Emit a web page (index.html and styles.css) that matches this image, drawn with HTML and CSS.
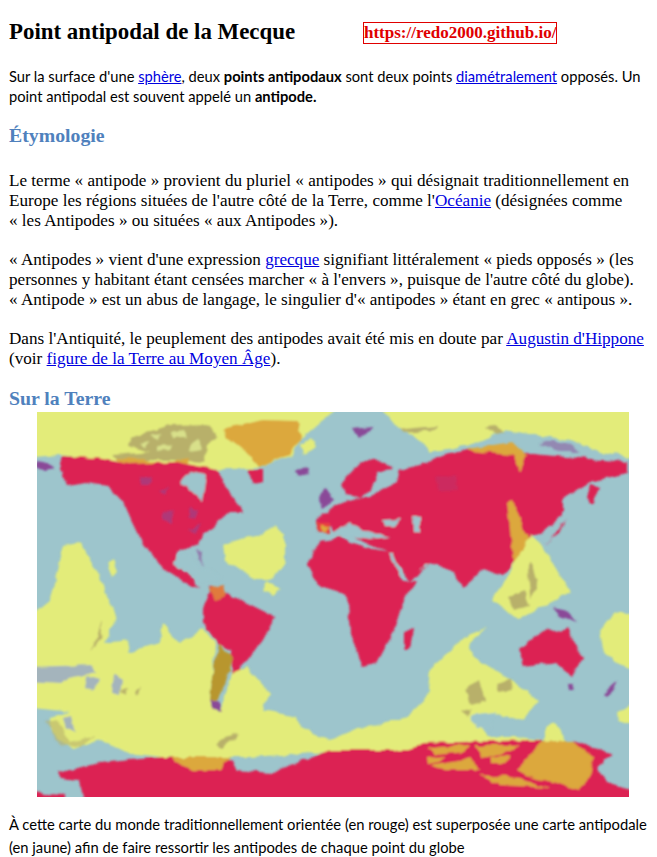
FILE: index.html
```html
<!DOCTYPE html>
<html lang="fr">
<head>
<meta charset="utf-8">
<title>Point antipodal de la Mecque</title>
<link rel="stylesheet" href="styles.css">
</head>
<body>
<header class="top">
  <h1 class="title">Point antipodal de la Mecque</h1>
  <a class="site" href="#">https://redo2000.github.io/</a>
</header>
<p class="sans intro">Sur la surface d'une <a href="#">sphère</a>, deux <b>points antipodaux</b> sont deux points <a href="#">diamétralement</a> opposés. Un<br>point antipodal est souvent appelé un <b>antipode.</b></p>
<h2 class="section first">Étymologie</h2>
<p class="serif">Le terme « antipode » provient du pluriel « antipodes » qui désignait traditionnellement en<br>Europe les régions situées de l'autre côté de la Terre, comme l'<a href="#">Océanie</a> (désignées comme<br>« les Antipodes » ou situées « aux Antipodes »).</p>
<p class="serif">« Antipodes » vient d'une expression <a href="#">grecque</a> signifiant littéralement « pieds opposés » (les<br>personnes y habitant étant censées marcher « à l'envers », puisque de l'autre côté du globe).<br>« Antipode » est un abus de langage, le singulier d'« antipodes » étant en grec « antipous ».</p>
<p class="serif">Dans l'Antiquité, le peuplement des antipodes avait été mis en doute par <a href="#">Augustin d'Hippone</a><br>(voir <a href="#">figure de la Terre au Moyen Âge</a>).</p>
<h2 class="section second">Sur la Terre</h2>
<svg class="map" viewBox="37 412 592 385" role="img" aria-label="Carte du monde et sa carte antipodale">
  <defs>
    <filter id="soft" x="-3%" y="-3%" width="106%" height="106%">
      <feTurbulence type="fractalNoise" baseFrequency="0.09" numOctaves="2" seed="4" result="n"/>
      <feDisplacementMap in="SourceGraphic" in2="n" scale="6" xChannelSelector="R" yChannelSelector="G"/>
      <feGaussianBlur stdDeviation="0.9"/>
    </filter>
    <clipPath id="frame"><rect x="37" y="412" width="592" height="385"/></clipPath>
  </defs>
  <rect x="37" y="412" width="592" height="385" fill="#9dc5cc"/>
  <g clip-path="url(#frame)">
  <g filter="url(#soft)">
    <!-- arctic yellow -->
    <path class="y" d="M20 400H348L318 424 300 440 292 456 258 468 205 470 120 462 60 455 20 458Z"/>
    <path class="y" d="M375 400H645V459L600 452 570 440 535 435 505 430 470 445 430 452 420 440 395 425Z"/>
    <path class="y" d="M300 444 312 438 316 448 302 456Z"/>
    <path class="p" d="M352 428 362 427 374 426 366 434 358 438Z"/>
    <path class="o2" d="M402 430 412 428 438 426 436 430 405 433ZM485 428 495 426 505 432 496 434Z"/>
    <path class="p" d="M540 444 552 440 570 444 580 452 560 452Z" opacity=".5"/>
    <!-- canadian islands, Greenland -->
    <path class="o2" d="M130 438 170 425 207 424 222 440 206 450 205 462 170 460 120 460 112 455 150 452 128 446Z"/>
    <path class="yt" d="M150 436 160 434 158 440 ZM172 432 182 430 186 438 174 438ZM190 444 200 440 200 450 190 452ZM160 446 172 444 170 450 158 452ZM140 444 148 442 146 448Z"/>
    <path class="y" d="M207 444 225 432 240 448 250 462 222 466 206 458Z"/>
    <path class="o" d="M222 430 262 420 298 421 301 438 290 455 258 468 245 452 230 440Z"/>
    <path class="o" d="M115 458 145 459 160 465 125 468Z"/>
    <path class="o" d="M176 460 190 458 188 468 175 468Z"/>
    <!-- North America -->
    <path class="r" d="M63 456 97 458 130 464 177 462 217 470 230 492 243 512 230 512 207 532 197 545 177 552 172 565 187 572 200 588 190 585 163 568 143 545 130 518 123 502 107 485 87 482 67 485 60 468Z"/>
    <path class="s" d="M180 482 190 472 207 475 203 502 193 492Z"/>
    <path class="p" d="M37 461 48 463 54 470 44 472 37 468Z"/>
    <path class="r" d="M247 470 262 470 262 482 254 484Z"/>
    <path class="p" d="M295 470 310 468 309 474 298 476Z"/>
    <path class="p" d="M318 497 326 488 334 500 322 508Z"/>
    <path class="p" d="M188 530 205 520 200 523 195 533ZM163 512 175 510 172 522 163 520ZM190 508 198 510 196 518 188 516ZM140 478 152 476 150 484 142 484ZM160 490 168 488 166 494Z" opacity=".55"/>
    <path class="p" d="M196 550 203 552 202 560 204 568Z" opacity=".6"/>
    <path class="s" d="M172 565 178 555 190 555 198 568 212 570 222 578 200 582 188 570Z"/>
    <!-- Africa -->
    <path class="r" d="M307 565 320 542 340 537 350 542 370 548 390 552 403 582 417 582 403 602 393 633 377 663 363 667 350 633 348 600 340 592 317 585Z"/>
    <path class="r" d="M403 633 413 628 410 650 403 650Z"/>
    <!-- Eurasia -->
    <path class="r" d="M397 482 400 470 420 465 445 455 467 450 517 452 543 455 627 462 627 473 590 482 563 498 563 515 543 532 530 535 510 568 503 575 493 572 483 568 463 588 453 572 430 562 420 575 410 582 390 552 370 545 350 535 335 535 330 525 318 530 316 522 330 508 345 502 370 496Z"/>
    <path class="r" d="M345 496 342 482 363 460 385 462 392 470 378 472 372 488 360 498Z"/>
    <path class="r" d="M590 485 600 488 593 505 587 498Z"/>
    <path class="r" d="M560 532 566 520 550 540 543 545Z"/>
    <path class="s" d="M332 535 350 522 365 530 390 538 370 540 345 536Z"/>
    <path class="s" d="M382 520 400 519 395 526 384 526Z"/>
    <path class="s" d="M412 516 420 517 420 533 413 531Z"/>
    <path class="s" d="M389 552 393 552 402 576 399 576Z"/>
    <path class="s" d="M425 563 429 563 420 572Z"/>
    <path class="p" d="M434 478 456 474 458 490 438 492Z" opacity=".2"/>
    <path class="f" d="M316 523 329 523 328 532 319 532Z"/>
    <path class="o" d="M321 526 327 526 325 531 321 531Z"/>
    <!-- East Asia orange + yellow -->
    <path class="o" d="M467 449 513 442 527 455 520 472 512 455 470 451Z"/>
    <path class="o" d="M507 502 513 500 530 545 513 565 512 548Z"/>
    <path class="y" d="M530 535 540 542 570 592 548 604 517 620 493 600 500 588 507 578 513 565Z"/>
    <path class="o2" d="M528 570 532 562 538 590 530 598ZM508 596 524 590 530 606 514 610Z"/>
    <path class="p" d="M553 608 565 610 577 622 560 616Z"/>
    <!-- Atlantic yellow -->
    <path class="y" d="M223 545 260 535 275 525 285 535 285 565 270 580 255 580 225 560Z"/>
    <path class="y" d="M267 582 280 588 272 595 262 590Z"/>
    <path class="y" d="M107 562 113 558 118 572 112 578Z"/>
    <!-- southern big yellow -->
    <path class="y" d="M25 620 50 600 63 545 80 542 100 578 108 600 117 620 103 643 130 640 127 653 160 643 163 623 180 643 203 628 215 643 210 700 220 712 233 670 247 667 270 693 263 710 297 717 300 727 330 740 360 727 373 725 407 717 427 697 430 670 463 637 487 628 470 643 473 657 500 673 537 700 523 720 497 713 477 723 487 737 517 737 543 740 553 727 570 745 420 752 330 752 250 757 163 757 127 753 100 740 73 750 50 730 50 717 70 712 25 707Z"/>
    <path class="g" d="M25 667 60 666 92 665 95 672 70 678 60 684 25 682Z"/>
    <path class="g" d="M86 676 100 680 96 690 84 688ZM114 674 122 680 120 694 112 692Z"/>
    <path class="g" d="M62 718 72 716 76 733 65 728Z"/>
    <path class="s" d="M470 715 495 712 490 730 478 728Z"/>
    <path class="o2" d="M102 620 96 640 90 650 100 640ZM120 690 128 688 126 694ZM135 692 140 686 138 696Z"/>
    <path class="o2" d="M465 690 480 680 486 700 470 704ZM496 684 510 680 512 690 498 692ZM462 712 470 708 468 716Z"/>
    <path class="o2" d="M215 745 232 733 240 735 222 748Z"/>
    <path class="o2" d="M45 722 56 720 70 742 96 736 80 748 60 744Z" opacity=".6"/>
    <!-- right-hand yellow -->
    <path class="y" d="M600 630 613 613 640 613V673L617 663 603 650Z"/>
    <path class="y" d="M617 713 640 700V722L618 722Z"/>
    <path class="p" d="M603 693 617 680 613 690 606 696Z"/>
    <!-- South America -->
    <path class="r" d="M203 610 210 586 245 602 275 617 263 640 250 657 233 675 230 650 217 643 203 623Z"/>
    <path class="h" d="M208 588 225 585 224 596 216 600Z"/>
    <path class="k" d="M218 643 233 657 227 680 217 700 210 700 212 677Z"/>
    <path class="p" d="M210 700 217 700 222 712 214 710Z"/>
    <!-- Australia -->
    <path class="r" d="M520 650 547 628 560 633 567 627 582 657 573 677 557 663 523 667Z"/>
    <path class="p" d="M568 685 574 685 573 690 569 690Z"/>
    <!-- Antarctica -->
    <path class="r" d="M57 773 100 763 130 760 163 757 230 760 237 770 270 773 330 750 410 750 423 743 537 740 570 740 613 755 597 767 607 783 640 793V810H85L80 780 60 778Z"/>
    <path class="r" d="M25 793 65 795V810H25Z"/>
    <path class="o" d="M170 757 230 757 220 770 190 770Z"/>
    <path class="o" d="M543 740 570 740 593 757 590 777 580 790 530 777 517 770Z"/>
    <path class="o" d="M427 748 470 745 465 752 435 755ZM430 765 470 758 480 770 445 770ZM475 745 520 745 500 755 482 758ZM480 775 520 778 550 788 500 785ZM490 758 510 756 505 764 490 764ZM427 758 445 756 440 762 428 764Z"/>
    <path class="y" d="M545 728 553 722 565 740 545 742Z"/>
  </g>
  </g>
</svg>
<p class="sans caption">À cette carte du monde traditionnellement orientée (en rouge) est superposée une carte antipodale<br>(en jaune) afin de faire ressortir les antipodes de chaque point du globe</p>
</body>
</html>
```

FILE: styles.css
```css
html, body { margin: 0; background: #fff; color: #000; }
body { padding: 0 9px; width: 639px; box-sizing: content-box; overflow: hidden; }
p, h1, h2 { margin: 0; }
a { color: #0000e0; }
.top { display: flex; align-items: center; padding-top: 19px; height: 26px; }
.title { font: bold 22.9px/26px "Liberation Serif", serif; width: 354px; flex: none; }
.site { font: bold 17px/20px "Liberation Serif", serif; color: #e00000; border: 1px solid #e00000; text-decoration: none; margin-top: 2px; }
.sans { font-family: Lato, sans-serif; font-size: 14.7px; line-height: 20px; white-space: nowrap; }
.intro { margin-top: 21px; }
.section { font: bold 19.8px/24px "Liberation Serif", serif; color: #4f81bd; }
.section.first { margin-top: 17px; }
.section.second { margin-top: 17px; }
.serif { font-family: "Liberation Serif", serif; font-size: 17.14px; line-height: 20px; white-space: nowrap; margin-top: 19px; }
.section + .serif { margin-top: 24px; }
.map { display: block; width: 592px; height: 385px; margin: 2px 0 0 28px; }
.sans.caption { margin-top: 16px; line-height: 23px; font-size: 14.75px; }
.r { fill: #dc2252; }
.y { fill: #e3ec7a; }
.yt { fill: #d8e08a; }
.o { fill: #dca83c; }
.o2 { fill: #b8b06a; }
.s { fill: #9dc5cc; }
.p { fill: #8a4a98; }
.g { fill: #a4b4bc; }
.f { fill: #e84040; }
.h { fill: #e07a3c; }
.k { fill: #b8962e; }
```
